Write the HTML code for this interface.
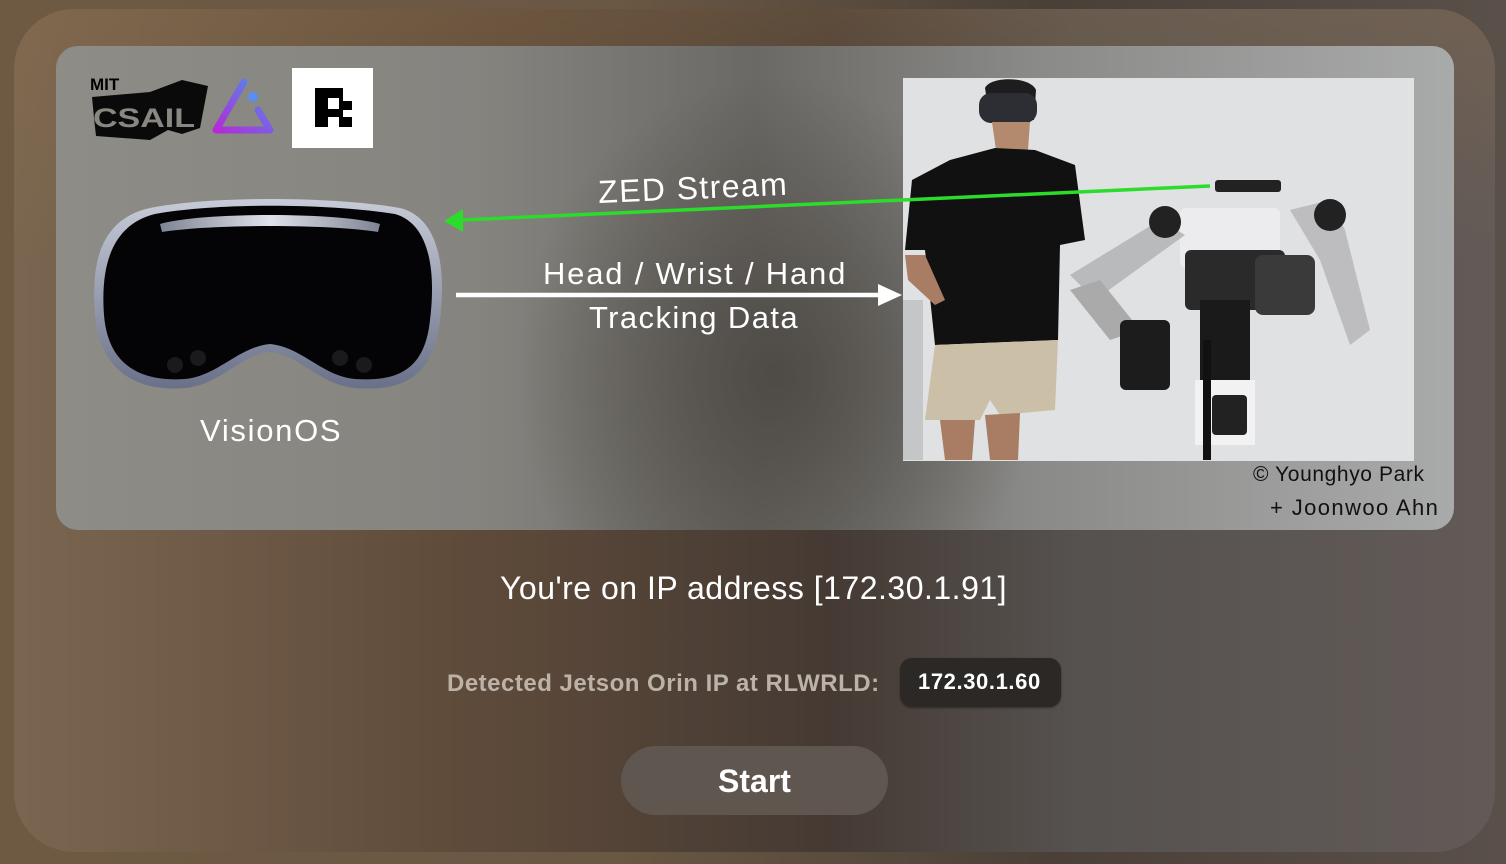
<!DOCTYPE html>
<html><head><meta charset="utf-8">
<style>
html,body{margin:0;padding:0;width:1506px;height:864px;overflow:hidden;font-family:"Liberation Sans",sans-serif;}
body{background:linear-gradient(90deg,#6e5a42 0%,#6b5844 40%,#4a4038 70%,#5a504a 100%);position:relative;}
.panel{position:absolute;left:14px;top:9px;width:1481px;height:843px;border-radius:60px;
background:linear-gradient(90deg,#7a6650 0%,#5f4b3a 30%,#453a33 55%,#565250 72%,#625a57 100%);}
.panel:before{content:"";position:absolute;inset:0;border-radius:60px;background:linear-gradient(180deg,rgba(140,110,75,0.35) 0%,rgba(0,0,0,0) 30%);}
.card{position:absolute;left:56px;top:46px;width:1398px;height:484px;border-radius:22px;overflow:hidden;
background:radial-gradient(ellipse 260px 300px at 720px 330px,#4e4a45 0%,rgba(78,74,69,0) 100%),linear-gradient(90deg,#8e8c86 0%,#86847f 30%,#6b6965 50%,#8a8a88 70%,#a9aaaa 100%);}
.t{position:absolute;color:#fff;white-space:nowrap;}
</style></head><body>
<div class="panel"></div>
<div class="card"></div>
<svg style="position:absolute;left:0;top:0" width="1506" height="864" viewBox="0 0 1506 864">
  <defs>
    <linearGradient id="tri" x1="0" y1="1" x2="1" y2="0"><stop offset="0" stop-color="#b62ad6"/><stop offset="1" stop-color="#4a8ff0"/></linearGradient>
    <linearGradient id="rim" x1="0" y1="0" x2="0" y2="1"><stop offset="0" stop-color="#c8ccd8"/><stop offset="1" stop-color="#6a7088"/></linearGradient>
    <linearGradient id="band" x1="0" y1="0" x2="1" y2="0"><stop offset="0" stop-color="#7e8494"/><stop offset=".5" stop-color="#dfe2ea"/><stop offset="1" stop-color="#7e8494"/></linearGradient>
  </defs>
  <text x="90" y="90" font-family="Liberation Sans" font-weight="900" font-size="17" fill="#000">MIT</text>
  <path d="M92 97 L150 92 L182 80 L208 86 L200 128 L182 134 L168 130 L150 140 L96 136 L94 118 Z" fill="#0a0a0a"/>
  <text x="93" y="127" font-family="Liberation Sans" font-weight="900" font-size="27" fill="#888780" textLength="102" lengthAdjust="spacingAndGlyphs">CSAIL</text>
  <path d="M244 82 L216 130 L270 130 L258 110" fill="none" stroke="url(#tri)" stroke-width="7" stroke-linecap="round" stroke-linejoin="round"/>
  <circle cx="253" cy="97" r="5" fill="#5a8ef0"/>
  <rect x="292" y="68" width="81" height="80" fill="#fff"/>
  <path d="M315 88 H343 V101 H352 V110 H343 V117 H352 V127 H339 V117 H328 V127 H315 Z M328 98 V109 H339 V98 Z" fill="#000"/>
  <path d="M150 208 C210 196 330 196 400 208 C440 218 446 270 440 320 C434 375 405 392 355 388 C320 385 300 355 270 352 C240 355 220 385 185 388 C135 392 100 370 95 315 C90 255 105 218 150 208 Z" fill="url(#rim)"/>
  <path d="M155 214 C215 203 325 203 395 214 C430 224 436 272 430 320 C425 368 400 382 355 379 C322 376 302 347 270 344 C238 347 218 376 185 379 C140 382 108 365 104 315 C100 260 115 224 155 214 Z" fill="#040406"/>
  <path d="M160 224 C200 212 340 212 380 224 L378 232 C330 224 210 224 162 232 Z" fill="url(#band)"/>
  <circle cx="175" cy="365" r="8" fill="#1a1a1e"/><circle cx="198" cy="358" r="8" fill="#1a1a1e"/>
  <circle cx="340" cy="358" r="8" fill="#1a1a1e"/><circle cx="364" cy="365" r="8" fill="#1a1a1e"/>
  <rect x="903" y="78" width="511" height="383" fill="#dfe1e2"/>
  <rect x="903" y="300" width="20" height="160" fill="#c4c6c8"/>
  <path d="M985 88 C990 76 1030 76 1036 90 L1034 120 L990 120 Z" fill="#1d1d1d"/>
  <rect x="979" y="93" width="58" height="30" rx="12" fill="#2c2e33"/>
  <path d="M992 122 L1030 122 L1028 150 L996 150 Z" fill="#b48a6f"/>
  <path d="M950 160 L995 148 L1035 150 L1075 165 L1085 240 L1060 245 L1058 340 L935 345 L925 250 L905 250 L912 180 Z" fill="#111"/>
  <path d="M935 345 L1058 340 L1055 410 L1000 415 L990 400 L980 420 L925 420 Z" fill="#cbbfa8"/>
  <path d="M940 420 L975 420 L972 460 L945 460 Z M985 415 L1020 413 L1018 460 L990 460 Z" fill="#a87d63"/>
  <path d="M905 255 L925 255 L945 300 L935 305 L908 280 Z" fill="#a87d63"/>
  <rect x="1215" y="180" width="66" height="12" rx="3" fill="#222"/>
  <rect x="1180" y="208" width="100" height="60" rx="6" fill="#ececee"/>
  <path d="M1070 275 L1160 220 L1185 235 L1095 300 Z" fill="#b9babc"/>
  <circle cx="1165" cy="222" r="16" fill="#222"/>
  <path d="M1070 290 L1110 340 L1140 330 L1100 280 Z" fill="#aaa"/>
  <rect x="1120" y="320" width="50" height="70" rx="6" fill="#1c1c1c"/>
  <rect x="1185" y="250" width="100" height="60" rx="6" fill="#2a2a2a"/>
  <rect x="1255" y="255" width="60" height="60" rx="8" fill="#3a3a3a"/>
  <path d="M1290 210 L1330 200 L1345 230 L1370 330 L1350 345 L1320 260 Z" fill="#bdbdbf"/>
  <circle cx="1330" cy="215" r="16" fill="#222"/>
  <rect x="1200" y="300" width="50" height="80" fill="#1a1a1a"/>
  <rect x="1195" y="380" width="60" height="65" fill="#f2f2f2"/>
  <rect x="1212" y="395" width="35" height="40" rx="4" fill="#222"/>
  <rect x="1203" y="340" width="8" height="120" fill="#111"/>
  <path d="M462 220 L1210 186" stroke="#2bdc2b" stroke-width="3.5"/>
  <path d="M444 221 L463 209 L463 232 Z" fill="#2bdc2b"/>
  <path d="M456 295 L880 295" stroke="#fff" stroke-width="4.5"/>
  <path d="M878 284 L902 295 L878 306 Z" fill="#fff"/>
</svg>
<div class="t" style="left:599px;top:174px;font-size:32px;letter-spacing:1.4px;transform:rotate(-2.5deg);transform-origin:left bottom;">ZED Stream</div>
<div class="t" style="left:543px;top:256px;font-size:31px;letter-spacing:1.8px;">Head / Wrist / Hand</div>
<div class="t" style="left:589px;top:300px;font-size:31px;letter-spacing:1.4px;">Tracking Data</div>
<div class="t" style="left:200px;top:413px;font-size:31px;letter-spacing:1.7px;">VisionOS</div>
<div class="t" style="left:1253px;top:463px;font-size:21px;letter-spacing:0.6px;color:#111;">© Younghyo Park</div>
<div class="t" style="left:1270px;top:495px;font-size:22px;letter-spacing:1.4px;color:#111;">+ Joonwoo Ahn</div>
<div class="t" style="left:500px;top:570px;font-size:32px;letter-spacing:0.5px;">You're on IP address [172.30.1.91]</div>
<div class="t" style="left:447px;top:670px;font-size:24px;font-weight:bold;letter-spacing:0.5px;color:#bcb2a8;">Detected Jetson Orin IP at RLWRLD:</div>
<div style="position:absolute;left:900px;top:658px;width:161px;height:49px;border-radius:12px;background:#2b2826;box-shadow:0 1px 2px rgba(0,0,0,.4);"></div>
<div class="t" style="left:918px;top:669px;font-size:22px;font-weight:bold;letter-spacing:0.6px;">172.30.1.60</div>
<div style="position:absolute;left:621px;top:746px;width:267px;height:69px;border-radius:35px;background:#5f5650;"></div>
<div class="t" style="left:621px;top:763px;width:267px;text-align:center;font-size:32px;font-weight:bold;">Start</div>
</body></html>
